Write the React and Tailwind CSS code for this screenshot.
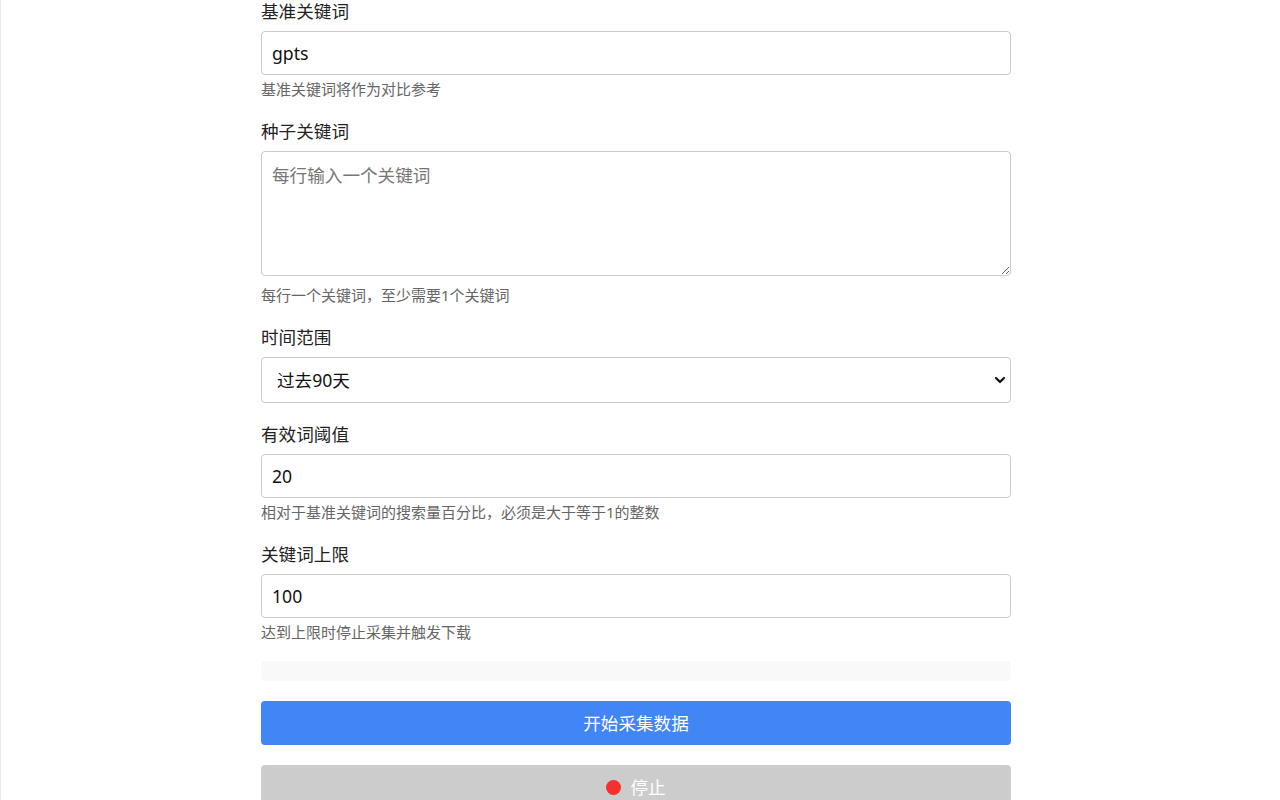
import React, { useState } from "react";

const FONT = { fontFamily: '"Noto Sans", "Noto Sans CJK SC", sans-serif' };

function Field({ label, hint, hintGap = "mt-[3px]", children }) {
  return (
    <div className="mb-[18px]">
      <label className="block text-[17.6px] leading-[26px] text-[#222] mb-[7px]">{label}</label>
      {children}
      {hint ? <p className={`${hintGap} text-[15px] leading-[22px] text-[#666]`}>{hint}</p> : null}
    </div>
  );
}

export default function App() {
  const [baseKeyword, setBaseKeyword] = useState("gpts");
  const [seeds, setSeeds] = useState("");
  const [range, setRange] = useState("90");
  const [threshold, setThreshold] = useState("20");
  const [limit, setLimit] = useState("100");

  const inputCls =
    "block w-full h-[44px] px-[10px] border border-[#ccc] rounded-[4px] bg-white text-[17.6px] text-[#111] outline-none";

  return (
    <div className="min-h-screen bg-white border-l border-[#e8ecf0]" style={FONT}>
      <div className="w-[750px] ml-[260px] -mt-[2px]">
        <Field label="基准关键词" hint="基准关键词将作为对比参考">
          <input className={inputCls} value={baseKeyword} onChange={(e) => setBaseKeyword(e.target.value)} />
        </Field>

        <Field label="种子关键词" hint="每行一个关键词，至少需要1个关键词" hintGap="mt-[8px]">
          <textarea
            className="block w-full h-[125px] px-[10px] py-[10px] border border-[#ccc] rounded-[4px] bg-white text-[17.6px] leading-[26px] text-[#111] placeholder:text-[#777] outline-none"
            placeholder="每行输入一个关键词"
            value={seeds}
            onChange={(e) => setSeeds(e.target.value)}
          />
        </Field>

        <Field label="时间范围">
          <div className="relative">
            <select
              className="block w-full h-[46px] pl-[15px] pr-[36px] border border-[#ccc] rounded-[4px] bg-white text-[17.6px] text-[#111] appearance-none outline-none"
              value={range}
              onChange={(e) => setRange(e.target.value)}
            >
              <option value="7">过去7天</option>
              <option value="30">过去30天</option>
              <option value="90">过去90天</option>
              <option value="365">过去12个月</option>
            </select>
            <svg
              className="absolute right-[5px] top-1/2 -translate-y-1/2 pointer-events-none"
              width="12"
              height="12"
              viewBox="0 0 12 12"
            >
              <path d="M2 4 L6 8 L10 4" fill="none" stroke="#111" strokeWidth="2.2" strokeLinecap="round" strokeLinejoin="round" />
            </svg>
          </div>
        </Field>

        <Field label="有效词阈值" hint="相对于基准关键词的搜索量百分比，必须是大于等于1的整数">
          <input className={inputCls} value={threshold} onChange={(e) => setThreshold(e.target.value)} />
        </Field>

        <Field label="关键词上限" hint="达到上限时停止采集并触发下载">
          <input className={inputCls} value={limit} onChange={(e) => setLimit(e.target.value)} />
        </Field>

        <div className="h-[20px] mt-[5px] rounded-[4px] bg-[#f8f9fa]"></div>

        <button
          type="button"
          className="mt-[20px] w-full h-[44px] rounded-[4px] bg-[#4285f4] text-white text-[17.6px] flex items-center justify-center"
        >
          开始采集数据
        </button>

        <button
          type="button"
          className="mt-[20px] w-full h-[44px] rounded-[4px] bg-[#cccccc] text-white text-[17.6px] flex items-center justify-center gap-[9px]"
        >
          <span className="w-[15px] h-[15px] rounded-full bg-[#f43030]"></span>
          停止
        </button>
      </div>
    </div>
  );
}
